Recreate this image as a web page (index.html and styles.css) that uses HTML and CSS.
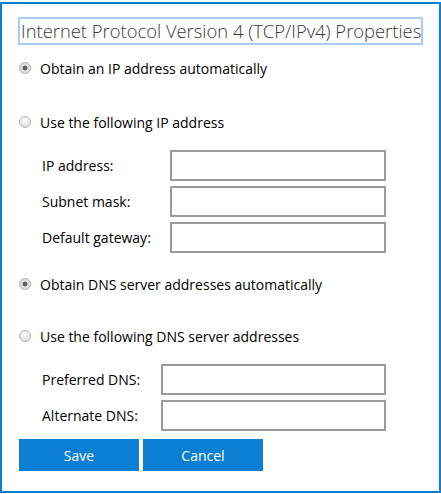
FILE: index.html
```html
<!DOCTYPE html>
<html lang="en">

<head>
    <meta charset="UTF-8">
    <meta name="viewport" content="width=device-width, initial-scale=1.0">
    <title>IPv4 Properties</title>
    <link rel="stylesheet" href="styles.css">
</head>

<body>
    <div class="dialog">
        <div class="title">Internet Protocol Version 4 (TCP/IPv4) Properties</div>

        <label class="option first">
            <input type="radio" name="ip" checked>
            <span>Obtain an IP address automatically</span>
        </label>

        <label class="option second">
            <input type="radio" name="ip">
            <span>Use the following IP address</span>
        </label>

        <div class="fields ip-fields">
            <div class="field-label">IP address:</div>
            <input class="box" type="text">
            <div class="field-label">Subnet mask:</div>
            <input class="box" type="text">
            <div class="field-label">Default gateway:</div>
            <input class="box" type="text">
        </div>

        <label class="option third">
            <input type="radio" name="dns" checked>
            <span>Obtain DNS server addresses automatically</span>
        </label>

        <label class="option fourth">
            <input type="radio" name="dns">
            <span>Use the following DNS server addresses</span>
        </label>

        <div class="fields dns-fields">
            <div class="field-label">Preferred DNS:</div>
            <input class="box" type="text">
            <div class="field-label">Alternate DNS:</div>
            <input class="box" type="text">
        </div>

        <div class="buttons">
            <button class="btn">Save</button>
            <button class="btn">Cancel</button>
        </div>
    </div>
</body>

</html>
```

FILE: styles.css
```css
body {
    font-family: "Open Sans", Arial, sans-serif;
    background-color: #ffffff;
    color: #000000;
    margin: 0;
    padding: 0;
}

.dialog {
    box-sizing: border-box;
    width: 441px;
    height: 491px;
    margin-top: 2px;
    border: 2px solid #0a7fd4;
    padding: 13px 0 0 17px;
}

.title {
    box-sizing: border-box;
    width: 405px;
    height: 28px;
    margin-left: -1px;
    border: 2px solid #a9cdf2;
    padding-left: 1px;
    font-size: 18.4px;
    font-weight: 300;
    line-height: 23px;
    color: #3a3a3a;
    white-space: nowrap;
    overflow: hidden;
}

.option {
    display: flex;
    align-items: center;
    height: 20px;
    font-size: 14px;
}

.option.first {
    margin-top: 13px;
}

.option.second {
    margin-top: 34px;
}

.option.third {
    margin-top: 21px;
}

.option.fourth {
    margin-top: 32px;
}

.option input {
    appearance: none;
    box-sizing: border-box;
    width: 12px;
    height: 12px;
    margin: 0 9px 0 0;
    border: 1px solid #b4b4b4;
    border-radius: 50%;
    background: radial-gradient(circle at 50% 35%, #fbfbfb, #d6d6d6);
}

.option input:checked {
    background: radial-gradient(circle, #5a5a5a 0, #6a6a6a 2.2px, #e4e4e4 2.8px, #d2d2d2 100%);
}

.fields {
    display: grid;
    grid-template-columns: 128px 216px;
    row-gap: 5px;
    align-items: center;
    margin-top: 18px;
    padding-left: 23px;
    font-size: 14px;
}

.dns-fields {
    grid-template-columns: 119px 225px;
}

.box {
    box-sizing: border-box;
    width: 100%;
    height: 31px;
    border: 2px solid #9b9b9b;
    margin: 0;
}

.buttons {
    display: flex;
    gap: 4px;
    margin-top: 8px;
}

.btn {
    width: 120px;
    height: 32px;
    border: none;
    background-color: #0a7fd4;
    color: #ffffff;
    font-family: "Open Sans", Arial, sans-serif;
    font-size: 14px;
}
```
